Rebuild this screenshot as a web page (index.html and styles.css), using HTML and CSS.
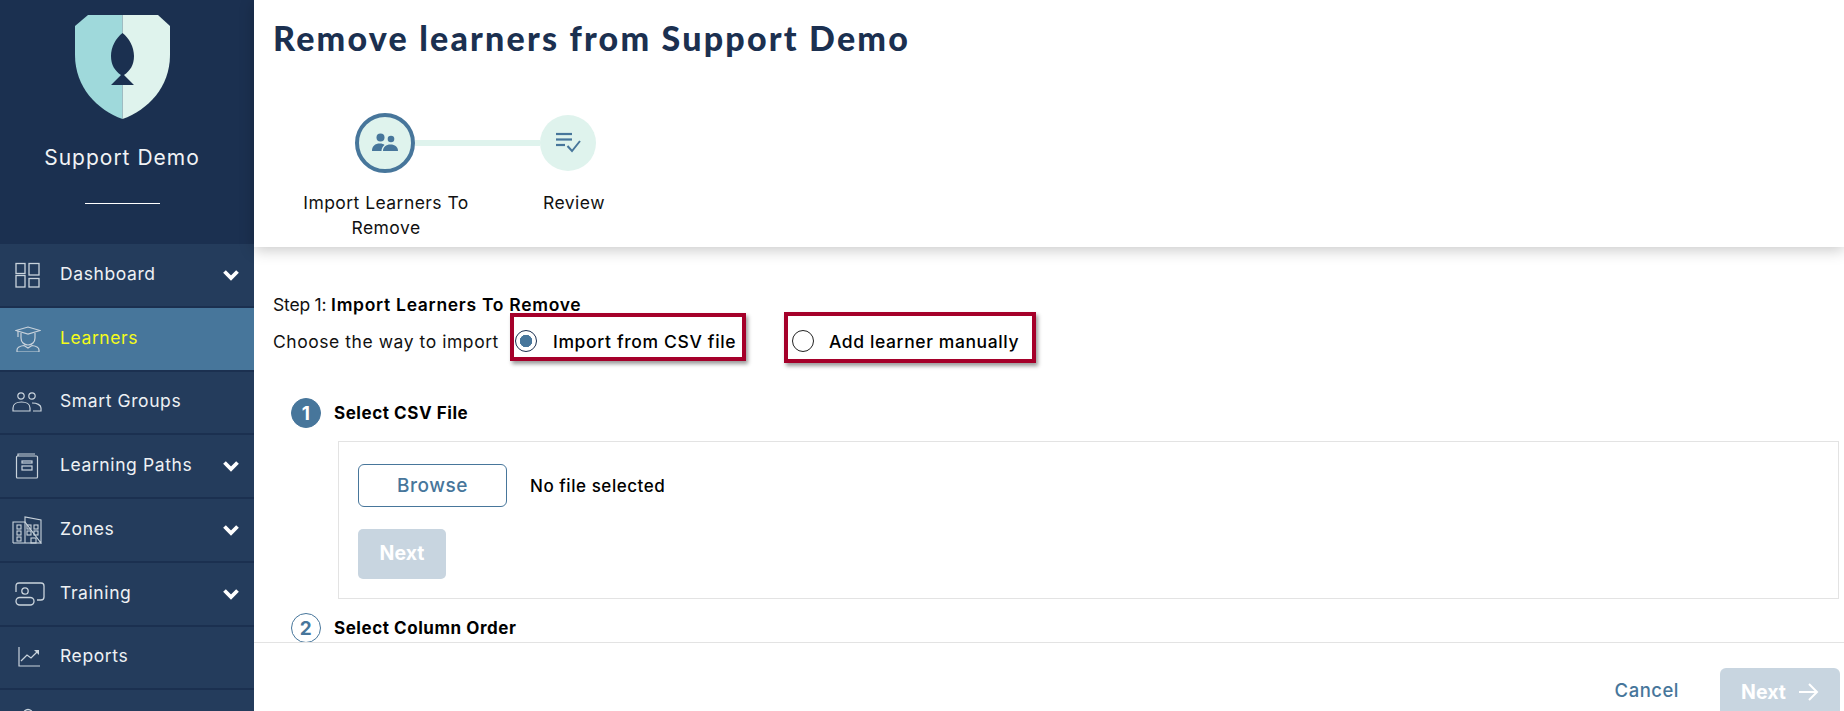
FILE: index.html
```html
<!DOCTYPE html>
<html lang="en">
<head>
<meta charset="utf-8">
<title>Remove learners</title>
<link rel="stylesheet" href="styles.css">
</head>
<body>
<div class="app">
  <aside class="sidebar">
    <div class="brand">
      <svg class="shield" width="95" height="104" viewBox="0 0 95 104">
        <path d="M47.5 0H13L0 11V40C0 72 22 95 47.5 104Z" fill="#9fd9db"/>
        <path d="M47.5 0H83L95 11V40C95 72 73 95 47.5 104Z" fill="#dff3ed"/>
        <path d="M47.5 18C41 23 36 32 36 41C36 50 40 56 46 60L36 70H59L49 60C55 56 59 50 59 41C59 32 54 23 47.5 18Z" fill="#1b3050"/>
      </svg>
      <div class="brand-name">Support Demo</div>
      <div class="brand-rule"></div>
    </div>
    <nav class="nav">
      <a class="nav-item">
        <svg class="nav-icon" width="26" height="26" viewBox="0 0 26 26"><g fill="none" stroke="#c9d3dc" stroke-width="1.3"><rect x="1" y="1.5" width="9" height="10"/><rect x="14" y="1.5" width="10" height="11.500"/><rect x="1" y="13.500" width="9" height="11.500"/><rect x="14" y="16.500" width="10" height="8.500"/></g></svg>
        <span class="nav-label">Dashboard</span>
        <svg class="chev" width="18" height="12" viewBox="0 0 18 12"><path d="M2.500 2.500L9 9L15.500 2.500" fill="none" stroke="#fff" stroke-width="3.800"/></svg>
      </a>
      <a class="nav-item active">
        <svg class="nav-icon" width="26" height="26" viewBox="0 0 26 26"><g fill="none" stroke="#c9d3dc" stroke-width="1.200"><path d="M1 4.500L13 1L25 4.500L13 8Z"/><path d="M6 7V12C6 16 9 19 13 19C17 19 20 16 20 12V7"/><path d="M3 5V11"/><path d="M2 26V24C2 21 5 20 9 19.500L13 22L17 19.500C21 20 24 21 24 24V26Z"/></g></svg>
        <span class="nav-label">Learners</span>
      </a>
      <a class="nav-item">
        <svg class="nav-icon groups" width="30" height="20" viewBox="0 0 30 20"><g fill="none" stroke="#c9d3dc" stroke-width="1.200"><circle cx="9" cy="4" r="3.200"/><circle cx="20" cy="4" r="3.200"/><path d="M1 19V16C1 12 5 10 9.500 10C14 10 18 12 18 16V19Z"/><path d="M20 11C25 11 29 13 29 16V19H21"/></g></svg>
        <span class="nav-label">Smart Groups</span>
      </a>
      <a class="nav-item">
        <svg class="nav-icon" width="26" height="26" viewBox="0 0 26 26"><g fill="none" stroke="#c9d3dc" stroke-width="1.200"><path d="M3 3V1H20"/><rect x="1.500" y="3" width="21" height="22" rx="1"/><rect x="7" y="8" width="10" height="2"/><rect x="7" y="13" width="10" height="4"/></g></svg>
        <span class="nav-label">Learning Paths</span>
        <svg class="chev" width="18" height="12" viewBox="0 0 18 12"><path d="M2.500 2.500L9 9L15.500 2.500" fill="none" stroke="#fff" stroke-width="3.800"/></svg>
      </a>
      <a class="nav-item">
        <svg class="nav-icon groups" width="30" height="28" viewBox="0 0 30 28"><g fill="none" stroke="#c9d3dc" stroke-width="1.100"><path d="M1 27V6H13V27"/><path d="M13 6V1L29 4V27Z"/><path d="M1 27H29"/><rect x="5" y="9" width="4" height="4"/><rect x="5" y="15" width="4" height="4"/><rect x="5" y="21" width="4" height="4"/><rect x="15" y="9" width="4" height="4"/><rect x="22" y="9" width="4" height="4"/><rect x="15" y="15" width="4" height="4"/><rect x="22" y="15" width="4" height="4"/><rect x="19" y="22" width="5" height="5"/></g></svg>
        <span class="nav-label">Zones</span>
        <svg class="chev" width="18" height="12" viewBox="0 0 18 12"><path d="M2.500 2.500L9 9L15.500 2.500" fill="none" stroke="#fff" stroke-width="3.800"/></svg>
      </a>
      <a class="nav-item">
        <svg class="nav-icon" width="30" height="24" viewBox="0 0 30 24"><g fill="none" stroke="#c9d3dc" stroke-width="1.300"><path d="M1 10V4C1 2 2 1 4 1H26C28 1 29 2 29 4V15C29 17 28 18 26 18H22"/><circle cx="10" cy="9" r="3.200"/><rect x="1" y="15.500" width="18" height="7.500" rx="3.700"/></g></svg>
        <span class="nav-label">Training</span>
        <svg class="chev" width="18" height="12" viewBox="0 0 18 12"><path d="M2.500 2.500L9 9L15.500 2.500" fill="none" stroke="#fff" stroke-width="3.800"/></svg>
      </a>
      <a class="nav-item">
        <svg class="nav-icon reports" width="22" height="20" viewBox="0 0 22 20"><g fill="none" stroke="#c9d3dc" stroke-width="1.200"><path d="M1 0V19H22"/></g><path d="M3 14L9 8L13 11L20 4" fill="none" stroke="#c9d3dc" stroke-width="1.300"/><path d="M16 3H21V8Z" fill="#c9d3dc"/></svg>
        <span class="nav-label">Reports</span>
      </a>
      <a class="nav-item last">
        <svg class="nav-icon" width="26" height="26" viewBox="0 0 26 26"><circle cx="13" cy="6" r="4.500" fill="none" stroke="#c9d3dc" stroke-width="1.300"/></svg>
      </a>
    </nav>
  </aside>

  <main class="main">
    <header class="page-head">
      <h1 class="page-title">Remove learners from Support Demo</h1>
      <div class="track">
        <div class="node current">
          <svg width="26" height="20" viewBox="0 0 26 20"><circle cx="8.500" cy="4.500" r="4" fill="#47769b"/><circle cx="19" cy="6" r="3.300" fill="#47769b"/><path d="M0 18C0 13 3 10.500 8 10.500C10 10.500 11.500 11 12.500 12C10.500 13.500 9.500 15.500 9.500 18Z" fill="#47769b"/><path d="M11 18C11 14 14 11.500 18.500 11.500C23 11.500 26 14 26 18Z" fill="#47769b"/></svg>
        </div>
        <div class="connector"></div>
        <div class="node">
          <svg width="26" height="24" viewBox="0 0 26 24"><g fill="none" stroke="#47769b" stroke-width="2.200"><path d="M1 3H17"/><path d="M1 8.500H17"/><path d="M1 14H10"/><path d="M12.500 15L17 20L25 10" stroke-width="2"/></g></svg>
        </div>
      </div>
      <div class="step-labels">
        <div class="step-label first">Import Learners To Remove</div>
        <div class="step-label second">Review</div>
      </div>
    </header>

    <section class="content">
      <p class="step-line">Step 1: <strong>Import Learners To Remove</strong></p>
      <div class="choose">
        <span class="choose-label">Choose the way to import</span>
        <label class="option first">
          <span class="radio checked"></span>
          <span class="option-text">Import from CSV file</span>
          <span class="mark"></span>
        </label>
        <label class="option second">
          <span class="radio"></span>
          <span class="option-text">Add learner manually</span>
          <span class="mark"></span>
        </label>
      </div>
      <div class="sec-head one">
        <span class="num filled">1</span>
        <span class="sec-title">Select CSV File</span>
      </div>
      <div class="card">
        <div class="file-row">
          <button class="browse" type="button">Browse</button>
          <span class="file-name">No file selected</span>
        </div>
        <button class="next-small" type="button">Next</button>
      </div>
      <div class="sec-head two">
        <span class="num">2</span>
        <span class="sec-title">Select Column Order</span>
      </div>
    </section>

    <footer class="foot">
      <a class="cancel">Cancel</a>
      <button class="next-main" type="button">Next
        <svg width="21" height="20" viewBox="0 0 21 20"><path d="M1 10H19M11 2L19 10L11 18" fill="none" stroke="#fff" stroke-width="2"/></svg>
      </button>
    </footer>
  </main>
</div>
</body>
</html>
```

FILE: styles.css
```css
* { box-sizing: border-box; }
html, body { margin: 0; height: 100%; overflow: hidden; background: #fff; }
body { font-family: Inter, "Liberation Sans", sans-serif; color: #000; }

.app { display: flex; height: 711px; overflow: hidden; }

.sidebar { width: 254px; flex: none; background: #1b3050; display: flex; flex-direction: column; overflow: hidden; }
.brand { height: 244px; flex: none; padding: 15px 10px 0 0; display: flex; flex-direction: column; align-items: center; }
.shield { display: block; flex: none; }
.brand-name { margin-top: 27px; color: #f1f3f5; font-size: 21px; line-height: 24px; letter-spacing: 1px; }
.brand-rule { width: 75px; height: 1px; margin-top: 33px; background: #fff; }

.nav { display: flex; flex-direction: column; flex: none; }
.nav-item { height: 61.750px; margin-bottom: 2px; flex: none; background: #243c5c; display: grid; grid-template-columns: 45px 1fr auto; align-items: center; padding: 0 14px 0 15px; color: #eef1f4; font-size: 17.500px; }
.nav-item.active { background: #47769b; }
.nav-item.active .nav-label { color: #f4fb1a; }
.nav-icon { display: block; }
.nav-label { margin-bottom: 3px; letter-spacing: .6px; }
.chev { display: block; }
.reports { margin-left: 3px; }
.groups { margin-left: -3px; }

.main { flex: 1; min-width: 0; display: flex; flex-direction: column; }

.page-head { height: 247px; flex: none; padding: 18px 0 0 19px; background: #fff; box-shadow: 0 3px 14px rgba(0,0,0,.22); position: relative; z-index: 1; }
.page-title { margin: 0; font-family: Lato, sans-serif; font-weight: 900; font-size: 34px; line-height: 40px; letter-spacing: 2.200px; color: #1b3050; }

.track { display: flex; align-items: center; height: 60px; margin: 55px 0 0 82px; }
.node { width: 56px; height: 56px; border-radius: 50%; background: #dff3ed; display: flex; align-items: center; justify-content: center; flex: none; }
.node.current { width: 60px; height: 60px; border: 4px solid #47769b; }
.connector { width: 125px; height: 6px; background: #dff3ed; }

.step-labels { display: flex; margin-top: 17px; font-size: 17.500px; line-height: 25px; letter-spacing: .45px; color: #111; }
.step-label { text-align: center; }
.step-label.first { width: 172px; margin-left: 27px; }
.step-label.second { width: 64px; margin-left: 70px; }

.content { flex: 1; min-height: 0; overflow: hidden; padding: 48px 5px 0 19px; }
.step-line { margin: 0; font-size: 17.500px; line-height: 20px; letter-spacing: -.2px; color: #111; }
.step-line strong { font-weight: 600; color: #000; letter-spacing: .7px; }

.choose { display: flex; align-items: center; height: 22px; margin-top: 15px; font-size: 17.500px; letter-spacing: .55px; color: #111; }
.choose-label { width: 242px; flex: none; white-space: nowrap; }
.option { display: flex; align-items: center; gap: 15px; flex: none; position: relative; font-weight: 500; color: #000; letter-spacing: .65px; white-space: nowrap; }
.option.first { width: 277px; gap: 16px; }
.option.second { width: 260px; letter-spacing: .6px; }
.radio { width: 22px; height: 22px; border-radius: 50%; border: 1.500px solid #222; background: #fff; flex: none; }
.radio.checked { border-color: #1b3050; background: radial-gradient(circle, #47769b 0 6px, #fff 6.500px); }
.mark { position: absolute; border: 4px solid #a5002a; box-shadow: 2px 3px 4px rgba(0,0,0,.4); }
.option.first .mark { left: -5px; top: -17px; width: 236px; height: 48px; }
.option.second .mark { left: -8px; top: -18px; width: 252px; height: 51px; }

.sec-head { display: flex; align-items: center; gap: 13px; margin-left: 18px; font-size: 17px; font-weight: 700; letter-spacing: .55px; }
.sec-head.one { margin-top: 46px; }
.sec-head.two { margin-top: 14px; }
.num { width: 30px; height: 30px; border-radius: 50%; border: 1.500px solid #47769b; color: #47769b; display: flex; align-items: center; justify-content: center; flex: none; font-size: 19px; font-weight: 700; }
.num.filled { background: #47769b; color: #fff; }

.card { margin: 13px 0 0 65px; height: 158px; padding: 22px 19px 0; border: 1px solid #e3e3e3; }
.file-row { display: flex; align-items: center; gap: 23px; font-size: 17px; font-weight: 500; letter-spacing: .55px; }
.browse { width: 149px; height: 43px; border: 1px solid #47769b; border-radius: 6px; background: #fff; color: #47769b; font: 500 19px Inter, sans-serif; letter-spacing: .5px; padding: 0; }
.next-small { display: block; width: 88px; height: 50px; margin-top: 22px; border: 0; border-radius: 5px; background: #c8d5e0; color: #fff; font: 700 19.500px Inter, sans-serif; padding: 0 0 2px; }

.foot { height: 69px; flex: none; border-top: 1px solid #e3e3e3; background: #fff; display: flex; justify-content: flex-end; padding: 25px 4px 0 0; overflow: hidden; gap: 41px; }
.cancel { color: #47769b; font-size: 18.500px; font-weight: 500; line-height: 44px; letter-spacing: .5px; }
.next-main { width: 120px; height: 50px; border: 0; border-radius: 6px; background: #c8d5e0; color: #fff; font: 700 19.500px Inter, sans-serif; display: flex; align-items: center; justify-content: center; gap: 12px; padding: 0 0 3px; flex: none; }
```
